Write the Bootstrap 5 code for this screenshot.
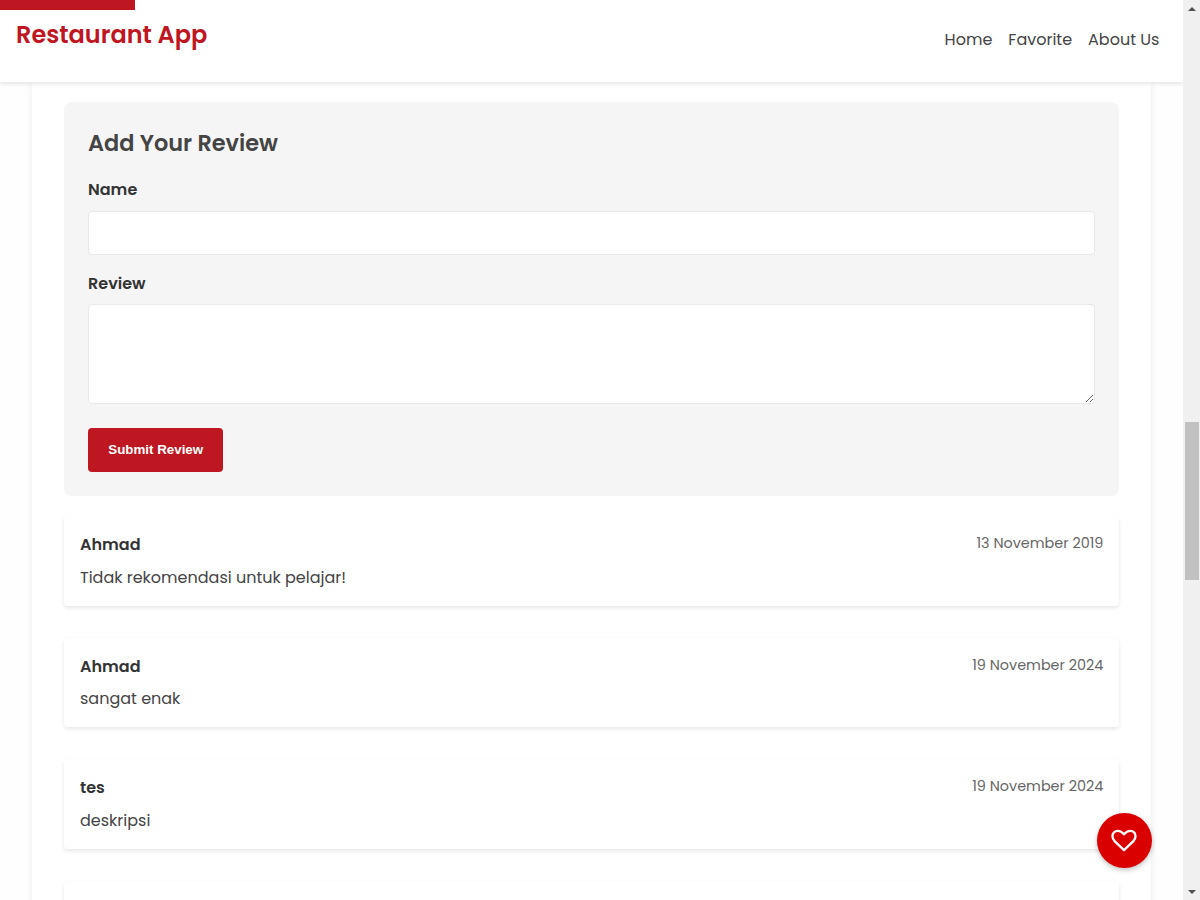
<!DOCTYPE html>
<html lang="en">
<head>
<meta charset="utf-8">
<meta name="viewport" content="width=device-width, initial-scale=1">
<title>Restaurant App</title>
<link rel="stylesheet" href="https://cdn.jsdelivr.net/npm/bootstrap@5.3.0/dist/css/bootstrap.min.css">
<style>
  body { font-family: Poppins, Inter, sans-serif; font-size: 16px; line-height: 1.6; color: #333; background: #fefefe; }
  .viewport { height: 900px; }
  .app-header { height: 82px; padding: 16px 24px 0 16px; box-shadow: 0 2px 4px rgba(0,0,0,.1); z-index: 5; }
  .progress-strip { width: 135.3px; height: 10px; background: #bf1722; }
  .brand-title { font-size: 24px; font-weight: 600; line-height: 38.4px; color: #bf1722; }
  .menu-links { gap: 16px; padding-top: 11px; }
  .menu-links a { color: #444; }
  .detail-panel { margin: 0 32px; padding: 20px 32px 0; height: 850px; box-shadow: 0 2px 8px rgba(0,0,0,.08); }
  .review-form { background: #f5f5f5; border-radius: 8px; padding: 24px; height: 394px; margin-bottom: 20px; }
  .review-form h3 { font-size: 22.4px; font-weight: 600; line-height: 35.8px; margin-bottom: 15.4px; color: #444; }
  .review-form label { font-weight: 600; line-height: 25.6px; margin-bottom: 8px; display: block; }
  .review-form .form-control { border: 1px solid #e8e8e8; border-radius: 4px; margin-bottom: 16px; height: 44px; }
  .review-form textarea.form-control { height: 100px; margin-bottom: 24px; resize: vertical; }
  .btn-submit { width: 134.5px; height: 44px; padding: 0 0 2px 1px; border-radius: 4px; background: #bf1722; color: #fff; font: bold 13.333px "Liberation Sans", Arial, sans-serif; }
  .review-item { height: 89.6px; padding: 16px; margin-bottom: 32px; border-radius: 4px; box-shadow: 0 2px 4px rgba(0,0,0,.1); }
  .reviewer { font-weight: 600; line-height: 25.6px; }
  .review-date { font-size: 14.4px; line-height: 23px; color: #666; }
  .review-text { margin: 7.05px 0 0; color: #444; line-height: 25.6px; }
  .like-button { right: 31.8px; bottom: 32px; width: 55px; height: 55px; background: #db0000; box-shadow: 0 2px 5px rgba(0,0,0,.25); z-index: 6; }
  .scroll-track { width: 16.6px; background: #f0f0f0; padding: 7px 0 6px; }
  .scroll-thumb { width: 14px; height: 158px; background: #c1c1c1; margin-top: 411px; }
</style>
</head>
<body>
<div class="viewport d-flex overflow-hidden">
  <div class="flex-grow-1 position-relative overflow-hidden">
    <header class="app-header bg-white position-relative d-flex justify-content-between align-items-start">
      <div class="progress-strip position-absolute top-0 start-0"></div>
      <h1 class="brand-title mb-0">Restaurant App</h1>
      <nav class="menu-links d-flex">
        <a class="text-decoration-none" href="#">Home</a>
        <a class="text-decoration-none" href="#">Favorite</a>
        <a class="text-decoration-none" href="#">About Us</a>
      </nav>
    </header>
    <main class="detail-panel bg-white">
      <form class="review-form">
        <h3>Add Your Review</h3>
        <label for="name">Name</label>
        <input id="name" class="form-control" type="text">
        <label for="review">Review</label>
        <textarea id="review" class="form-control"></textarea>
        <button class="btn-submit border-0 d-block" type="button">Submit Review</button>
      </form>
      <article class="review-item">
        <div class="d-flex justify-content-between align-items-start"><span class="reviewer">Ahmad</span><span class="review-date">13 November 2019</span></div>
        <p class="review-text">Tidak rekomendasi untuk pelajar!</p>
      </article>
      <article class="review-item">
        <div class="d-flex justify-content-between align-items-start"><span class="reviewer">Ahmad</span><span class="review-date">19 November 2024</span></div>
        <p class="review-text">sangat enak</p>
      </article>
      <article class="review-item">
        <div class="d-flex justify-content-between align-items-start"><span class="reviewer">tes</span><span class="review-date">19 November 2024</span></div>
        <p class="review-text">deskripsi</p>
      </article>
      <article class="review-item"></article>
    </main>
    <button class="like-button position-absolute rounded-circle border-0 p-0 d-flex align-items-center justify-content-center" type="button" aria-label="like">
      <svg width="26" height="24" viewBox="0 0 26 24" fill="none" stroke="#fff" stroke-width="2.3" stroke-linejoin="round"><path d="M13 21.2 3.6 12.1C2.2 10.7 1.5 9.2 1.5 7.3 1.5 3.9 3.7 1.8 7 1.8 9.6 1.8 11.5 3.5 13 5.3 14.5 3.5 16.4 1.8 19 1.8 22.3 1.8 24.5 3.9 24.5 7.3 24.5 9.2 23.8 10.7 22.4 12.1Z"/></svg>
    </button>
  </div>
  <div class="scroll-track d-flex flex-column align-items-center flex-shrink-0">
    <svg width="8" height="4" viewBox="0 0 8 4"><path d="M0 4 4 0l4 4z" fill="#505050"/></svg>
    <div class="scroll-thumb"></div>
    <svg class="mt-auto" width="8" height="4" viewBox="0 0 8 4"><path d="M0 0 4 4l4-4z" fill="#505050"/></svg>
  </div>
</div>
<script src="https://cdn.jsdelivr.net/npm/bootstrap@5.3.0/dist/js/bootstrap.bundle.min.js"></script>
</body>
</html>
